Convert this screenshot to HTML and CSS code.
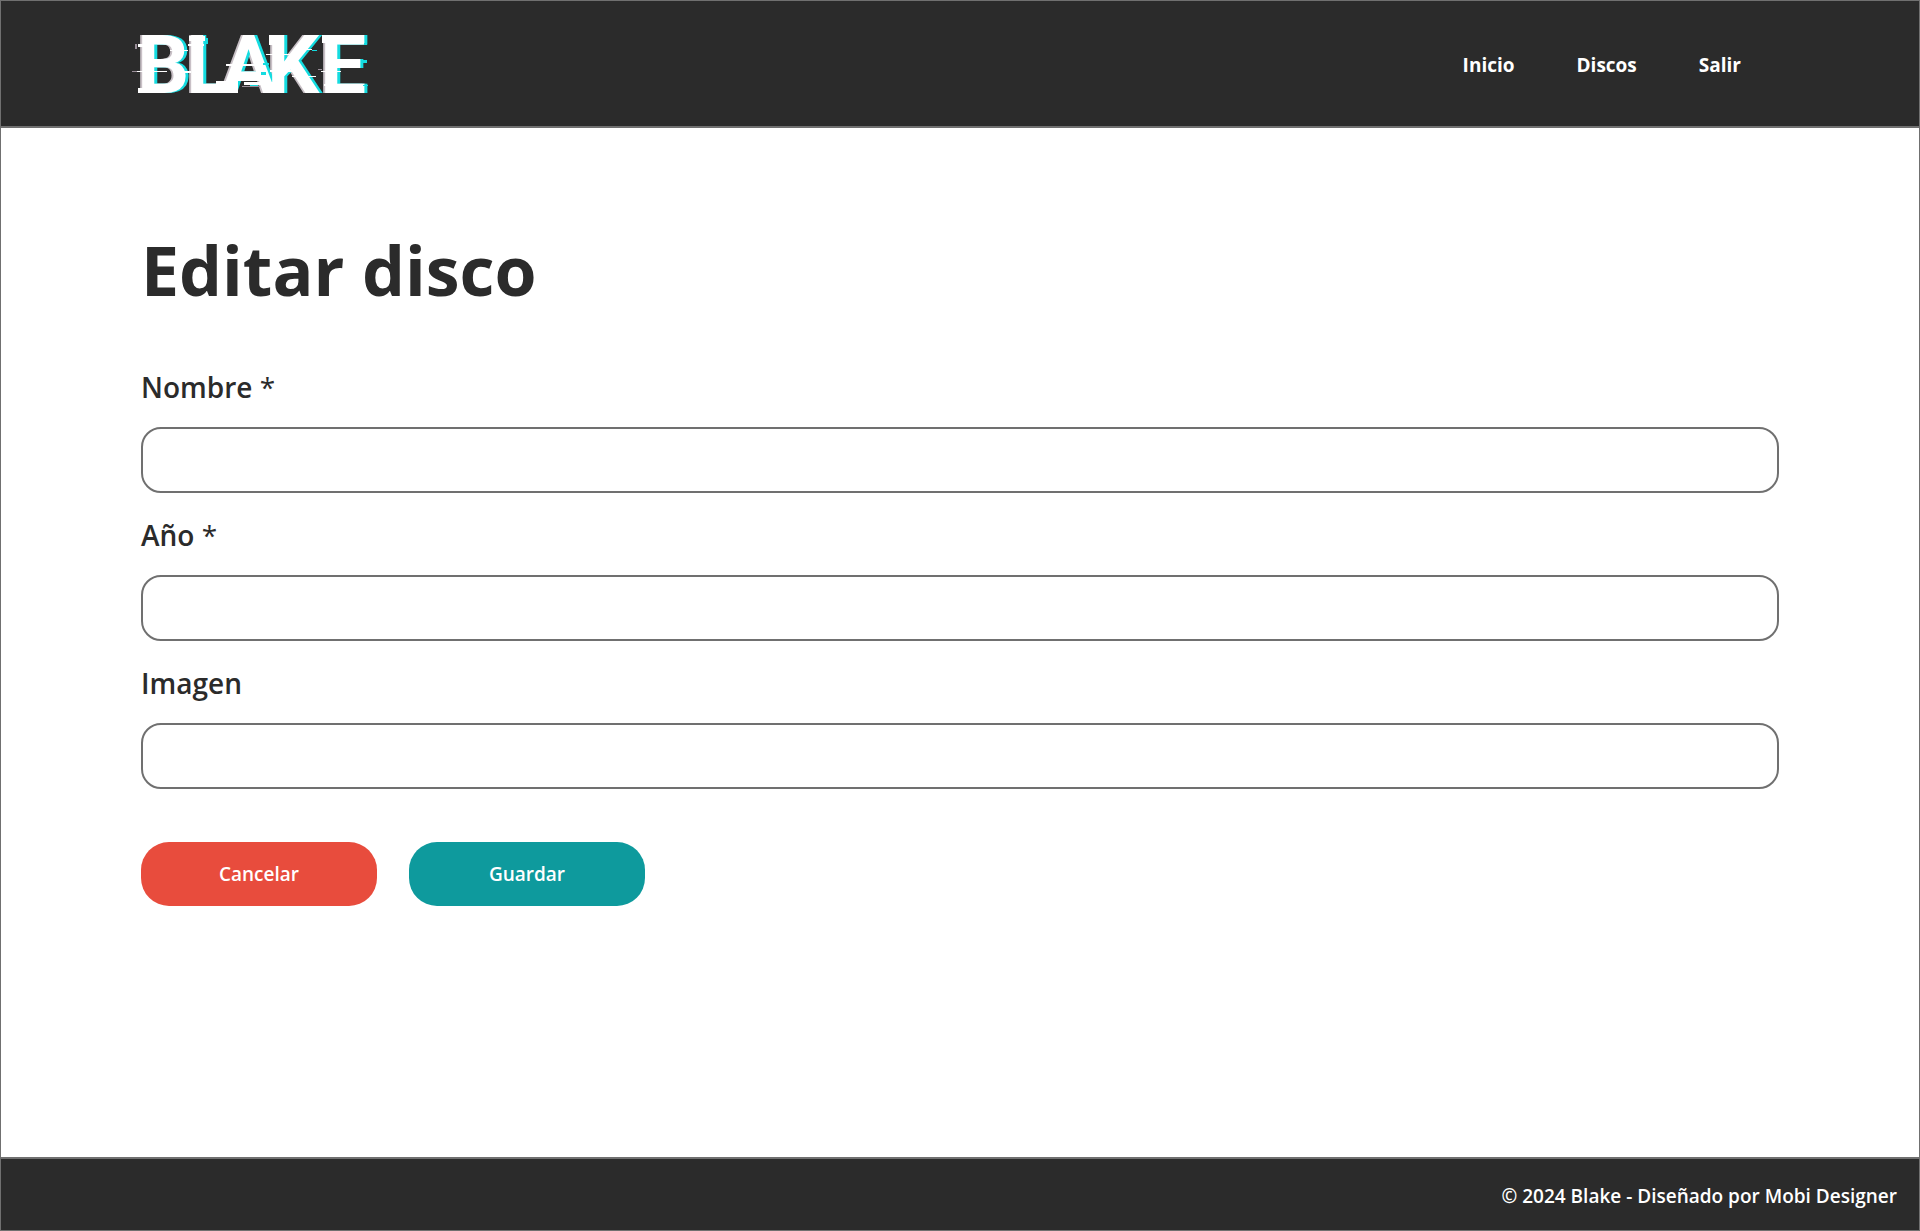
FILE: index.html
```
<!DOCTYPE html>
<html lang="es">
<head>
  <meta charset="utf-8">
  <meta name="viewport" content="width=device-width, initial-scale=1">
  <title>Editar disco - Blake</title>
  <link rel="stylesheet" href="styles.css">
</head>
<body>
  <div class="page">
    <header class="header">
      <a class="logo" href="#" aria-label="Blake">
        <svg class="logo-art" width="240" height="104" viewBox="0 -19 240 104">
          <text class="logo-word" y="61" x="5 54 89 135 188">BLAKE</text>
          <g fill="#ffffff">
            <rect x="1" y="39" width="34" height="1"/>
            <rect x="6" y="12" width="16" height="3"/>
            <rect x="6" y="56" width="12" height="5"/>
            <rect x="38" y="18" width="18" height="1"/>
            <rect x="41" y="39" width="18" height="2"/>
            <rect x="57" y="4" width="16" height="5"/>
            <rect x="56" y="12" width="16" height="2"/>
            <rect x="84" y="49" width="22" height="12"/>
            <rect x="94" y="32" width="34" height="2"/>
            <rect x="112" y="50" width="32" height="3"/>
            <rect x="137" y="3" width="14" height="10"/>
            <rect x="134" y="22" width="30" height="1"/>
            <rect x="138" y="38" width="22" height="2"/>
            <rect x="160" y="44" width="24" height="1"/>
            <rect x="166" y="17" width="14" height="1"/>
            <rect x="190" y="3" width="14" height="8"/>
            <rect x="189" y="39" width="20" height="1"/>
            <rect x="192" y="52" width="40" height="2"/>
          </g>
          <g fill="#14dce0">
            <rect x="73" y="6" width="3" height="6"/>
            <rect x="131" y="31" width="6" height="2"/>
            <rect x="129" y="40" width="5" height="3"/>
            <rect x="118" y="53" width="8" height="2"/>
            <rect x="180" y="18" width="5" height="1"/>
            <rect x="231" y="28" width="4" height="3"/>
            <rect x="232" y="11" width="3" height="2"/>
            <rect x="231" y="53" width="5" height="1"/>
          </g>
          <g fill="#9a8f99">
            <rect x="3" y="12" width="2" height="5"/>
            <rect x="0" y="39" width="5" height="1"/>
            <rect x="110" y="54" width="18" height="1"/>
            <rect x="186" y="37" width="4" height="1"/>
          </g>
        </svg>
      </a>
      <nav class="nav" aria-label="Principal">
        <a class="nav-link" href="#">Inicio</a>
        <a class="nav-link" href="#">Discos</a>
        <a class="nav-link" href="#">Salir</a>
      </nav>
    </header>

    <main class="main">
      <h1 class="title">Editar disco</h1>
      <form class="form">
        <div class="field">
          <label class="label" for="nombre">Nombre <span class="required">*</span></label>
          <input class="input" id="nombre" name="nombre" type="text" required>
        </div>
        <div class="field">
          <label class="label" for="anio">Año <span class="required">*</span></label>
          <input class="input" id="anio" name="anio" type="text" required>
        </div>
        <div class="field">
          <label class="label" for="imagen">Imagen</label>
          <input class="input" id="imagen" name="imagen" type="text">
        </div>
        <div class="actions">
          <button class="button button-cancel" type="button">Cancelar</button>
          <button class="button button-save" type="submit">Guardar</button>
        </div>
      </form>
    </main>

    <footer class="footer">
      <p class="credit">© 2024 Blake - Diseñado por Mobi Designer</p>
    </footer>
  </div>
</body>
</html>
```
FILE: styles.css
```
* {
  box-sizing: border-box;
}

body {
  margin: 0;
  background: #ffffff;
  color: #2b2b2b;
  font-family: "Segoe UI", "Open Sans", "Noto Sans", sans-serif;
}

.page {
  display: flex;
  flex-direction: column;
  min-height: 100vh;
  border: 1px solid #707070;
}

.header {
  display: flex;
  align-items: center;
  justify-content: space-between;
  padding: 12px 178px 9px 131px;
  background: #2b2b2b;
  border-bottom: 2px solid #707070;
}

.logo,
.logo-art {
  display: block;
}

.logo-word {
  fill: #ffffff;
  filter: drop-shadow(3px 0 0 #14dce0) drop-shadow(-2px 0 0 #c8c0c6);
  font-family: Roboto, "Liberation Sans", sans-serif;
  font-size: 82px;
  font-weight: 700;
}

.nav {
  display: flex;
  gap: 62px;
}

.nav-link {
  color: #ffffff;
  font-size: 19px;
  font-weight: 700;
  line-height: 28px;
  text-decoration: none;
}

.main {
  flex: 1;
  padding: 94px 140px;
}

.title {
  margin: 0 0 49px;
  font-size: 68px;
  font-weight: 700;
  line-height: 96px;
}

.form {
  display: flex;
  flex-direction: column;
  gap: 22px;
}

.field {
  display: flex;
  flex-direction: column;
  gap: 20px;
}

.label {
  font-size: 28px;
  font-weight: 600;
  line-height: 40px;
}

.required {
  font-weight: 400;
}

.input {
  width: 100%;
  height: 66px;
  padding: 0 20px;
  border: 2px solid #707070;
  border-radius: 20px;
  background: #ffffff;
  color: inherit;
  font: inherit;
  font-size: 19px;
}

.actions {
  display: flex;
  gap: 32px;
  padding-top: 31px;
}

.button {
  width: 236px;
  height: 64px;
  padding: 0;
  border: 0;
  border-radius: 28px;
  color: #ffffff;
  font-family: inherit;
  font-size: 19px;
  font-weight: 600;
}

.button-cancel {
  background: #e84c3d;
}

.button-save {
  background: #0e9a9d;
}

.footer {
  padding: 24px 22px 20px;
  background: #2b2b2b;
  border-top: 2px solid #707070;
}

.credit {
  margin: 0;
  color: #ffffff;
  font-size: 19px;
  font-weight: 600;
  line-height: 27px;
  text-align: right;
}
```
